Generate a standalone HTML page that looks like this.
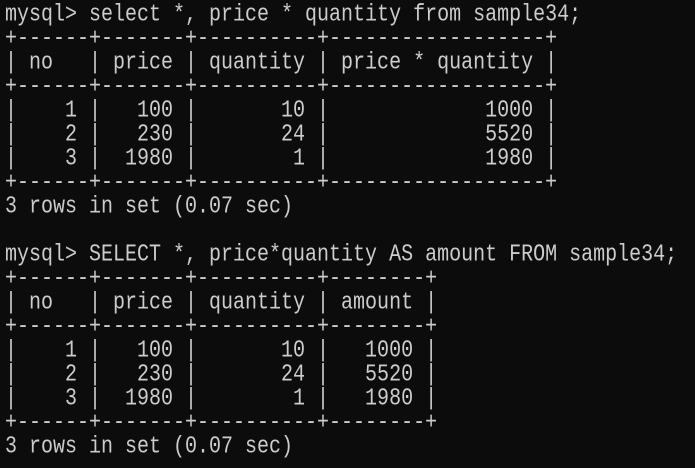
<!DOCTYPE html>
<html><head><meta charset="utf-8"><style>
html,body{margin:0;padding:0;background:#0c0c0c;width:695px;height:468px;overflow:hidden}
pre{margin:0;padding:3px 0 0 5px;font-family:"Liberation Mono",monospace;font-size:20px;line-height:20px;color:#cccccc;white-space:pre;transform:scaleY(1.2);transform-origin:0 0}
</style></head><body><pre>mysql&gt; select *, price * quantity from sample34;
+------+-------+----------+------------------+
| no   | price | quantity | price * quantity |
+------+-------+----------+------------------+
|    1 |   100 |       10 |             1000 |
|    2 |   230 |       24 |             5520 |
|    3 |  1980 |        1 |             1980 |
+------+-------+----------+------------------+
3 rows in set (0.07 sec)

mysql&gt; SELECT *, price*quantity AS amount FROM sample34;
+------+-------+----------+--------+
| no   | price | quantity | amount |
+------+-------+----------+--------+
|    1 |   100 |       10 |   1000 |
|    2 |   230 |       24 |   5520 |
|    3 |  1980 |        1 |   1980 |
+------+-------+----------+--------+
3 rows in set (0.07 sec)</pre></body></html>
